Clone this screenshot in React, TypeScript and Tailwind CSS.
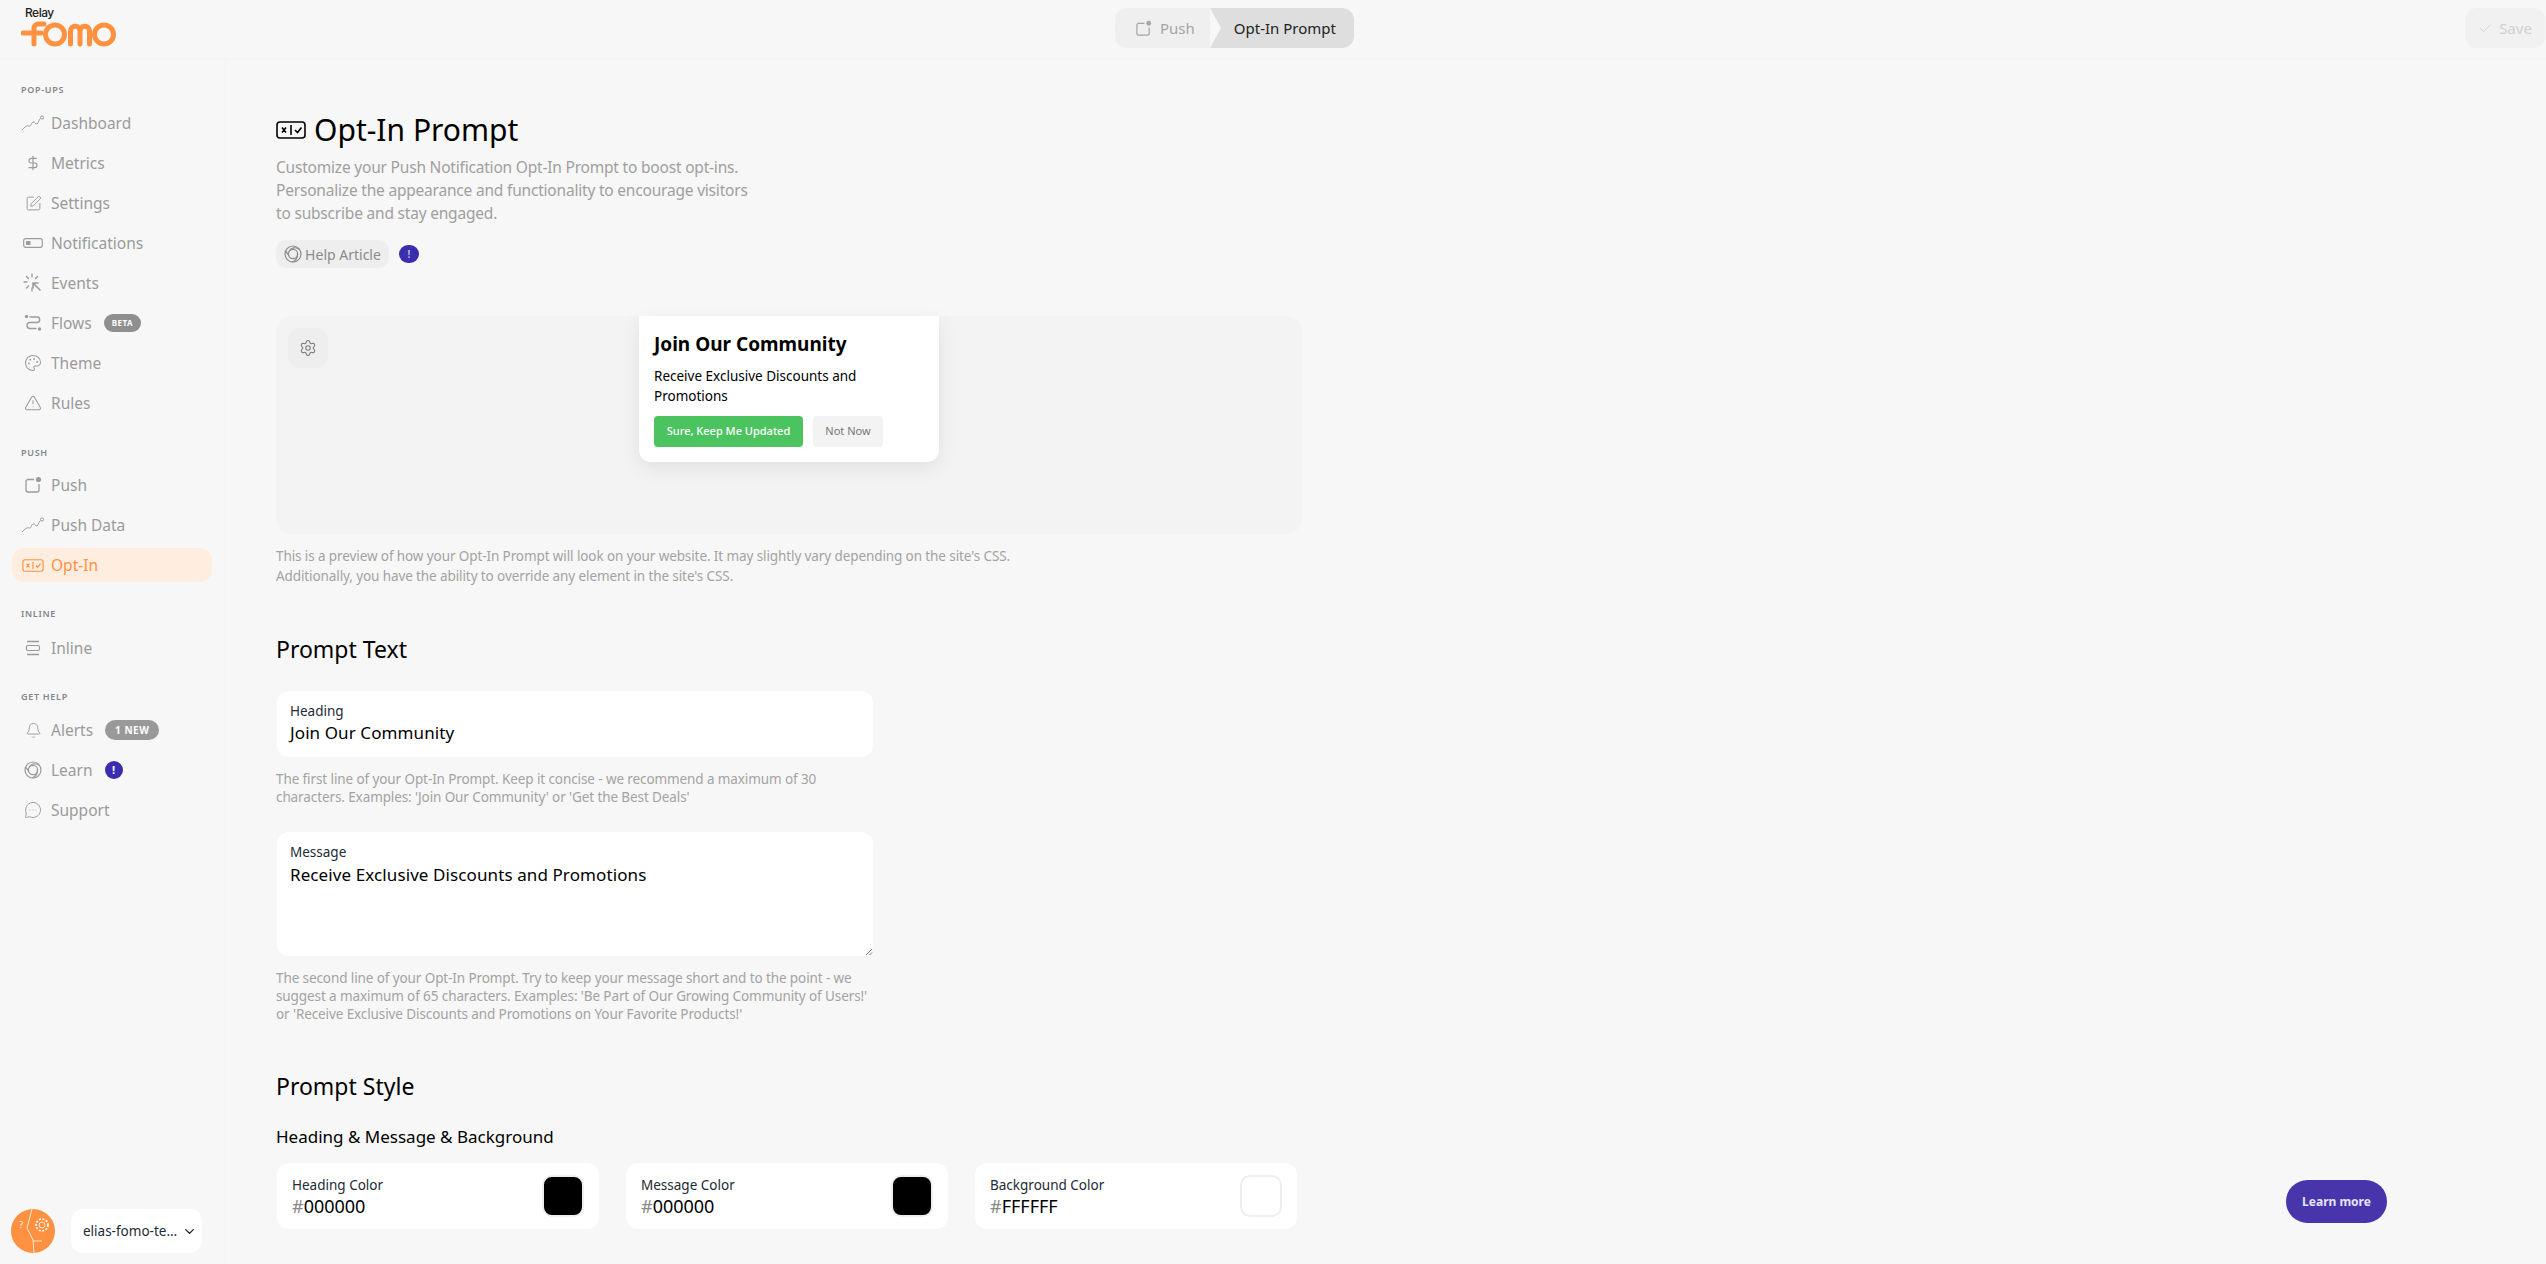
import { Bell, Check, ChevronDown, DollarSign, MessageCircleMore, Palette, Settings, SquarePen, TriangleAlert } from "lucide-react";
import type { ReactNode } from "react";

const FONT = "font-['Noto_Sans','Liberation_Sans',sans-serif]";

const ChartIcon = () => (
    <svg width="24" height="16" viewBox="0 0 24 16" fill="none" stroke="currentColor" strokeWidth="1">
        <path d="M1 15 C4 12 6 10 8 11 C10 12 10 8 12 7 C14 6 15 10 16 9 C18 7 18 4 19.5 3.5" />
        <circle cx="21" cy="2.5" r="1.6" />
    </svg>
);

const PromptIcon = ({ width = 22, height = 13 }: { width?: number; height?: number }) => (
    <svg width={width} height={height} viewBox="0 0 30 18" fill="none" stroke="currentColor" strokeWidth="1.6">
        <rect x="1" y="1" width="28" height="16" rx="3" />
        <path d="M6 6.5l4 5M10 6.5l-4 5M15 4v10M19 9l2.5 2.5 4-5" />
    </svg>
);

const ToggleIcon = () => (
    <svg width="20" height="10" viewBox="0 0 20 10" fill="none">
        <rect x="0.7" y="0.7" width="18.6" height="8.6" rx="2" stroke="currentColor" strokeWidth="1.2" />
        <rect x="3" y="3" width="4.5" height="4" fill="currentColor" />
    </svg>
);

const EventsIcon = () => (
    <svg width="20" height="20" viewBox="0 0 20 20" fill="none" stroke="currentColor" strokeWidth="1.3" strokeLinecap="round">
        <path d="M9 1v3M9 15v3M1 9h3M3.5 3.5l2 2M3.5 15l2-2M14.5 3.5l-2 2" />
        <path d="M10 10h5M10 10v5M10 10l7 7" strokeWidth="1.6" />
    </svg>
);

const FlowsIcon = () => (
    <svg width="18" height="18" viewBox="0 0 18 18" fill="none" stroke="currentColor" strokeWidth="1.3" strokeLinecap="round">
        <circle cx="2.5" cy="2.5" r="1.7" fill="currentColor" stroke="none" />
        <circle cx="15.5" cy="15" r="1.7" fill="currentColor" stroke="none" />
        <path d="M6 3h7a2.5 2.5 0 0 1 0 5.5H6A2.5 2.5 0 0 0 6 14.5h6" />
    </svg>
);

const PushIcon = ({ size = 18 }: { size?: number }) => (
    <svg width={size} height={size} viewBox="0 0 18 18" fill="none">
        <path d="M10 3.5H4a2 2 0 0 0-2 2V14a2 2 0 0 0 2 2h9a2 2 0 0 0 2-2V8" stroke="currentColor" strokeWidth="1.3" />
        <circle cx="14.5" cy="3.5" r="2.6" fill="currentColor" />
    </svg>
);

const InlineIcon = () => (
    <svg width="16" height="16" viewBox="0 0 16 16" fill="none" stroke="currentColor" strokeWidth="1.2">
        <path d="M2 1.5h12M2 14.5h12" strokeWidth="1.4" />
        <rect x="1.5" y="5.5" width="13" height="5" rx="1.5" />
    </svg>
);

const LearnIcon = ({ size = 18 }: { size?: number }) => (
    <svg width={size} height={size} viewBox="0 0 18 18" fill="none" stroke="currentColor" strokeWidth="1.2">
        <circle cx="9" cy="9" r="8" />
        <circle cx="9" cy="9" r="4.6" />
        <path d="M5 6.5C7 2.5 12 1.5 15.5 4.5M13.4 8C14 12 12 15.5 8 17M5 11C3.5 8.5 2.5 7 1.6 6" />
    </svg>
);

const Logo = () => (
    <div className="flex flex-col items-start pl-[21px] pt-[6px]">
        <span className="ml-1 text-[12px] leading-[14px] font-medium tracking-[-0.5px] text-[#222] font-['Inter',sans-serif]">Relay</span>
        <svg className="mt-px" width="96" height="26" viewBox="0 0 96 26" fill="none" stroke="#ff9141" strokeWidth="5" strokeLinecap="round">
            <path d="M2 12h18M23 3h-6a4 4 0 0 0-4 4v16" />
            <circle cx="34" cy="13.5" r="9.5" />
            <path d="M49.5 23V10a4.75 4.75 0 0 1 9.5 0V23M59 10a4.75 4.75 0 0 1 9.5 0V23" />
            <circle cx="83" cy="13.5" r="9.5" />
        </svg>
    </div>
);

interface NavItemProps {
    icon: ReactNode;
    label: string;
    active?: boolean;
    extra?: ReactNode;
}

const NavItem = ({ icon, label, active, extra }: NavItemProps) => (
    <div className={`mx-3 mb-[6px] flex h-[34px] items-center rounded-[12px] ${active ? "bg-[#ffede0] text-[#ff9141]" : "text-[#9b9b9b]"}`}>
        <span className="ml-[9px] flex w-6 shrink-0 items-center justify-center">{icon}</span>
        <span className="ml-[6px] translate-y-px text-[15.5px] leading-none">{label}</span>
        {extra}
    </div>
);

const NavLabel = ({ text, className }: { text: string; className: string }) => (
    <div className={`pl-[21px] text-[9px] leading-[12px] font-semibold tracking-[0.7px] text-[#85868c] ${className}`}>{text}</div>
);

const Sidebar = () => (
    <aside className="flex h-full w-[226px] shrink-0 flex-col border-r-2 border-[#f5f5f5] pt-[24px]">
        <NavLabel text="POP-UPS" className="mb-[10px]" />
        <NavItem icon={<ChartIcon />} label="Dashboard" />
        <NavItem icon={<DollarSign size={16} strokeWidth={1.8} />} label="Metrics" />
        <NavItem icon={<SquarePen size={17} strokeWidth={1.4} />} label="Settings" />
        <NavItem icon={<ToggleIcon />} label="Notifications" />
        <NavItem icon={<EventsIcon />} label="Events" />
        <NavItem
            icon={<FlowsIcon />}
            label="Flows"
            extra={<span className="ml-[12px] rounded-full bg-[#8f8f8f] px-2 py-[3px] text-[8px] leading-[12px] font-bold tracking-[0.5px] text-white">BETA</span>}
        />
        <NavItem icon={<Palette size={18} strokeWidth={1.4} />} label="Theme" />
        <NavItem icon={<TriangleAlert size={18} strokeWidth={1.4} />} label="Rules" />
        <NavLabel text="PUSH" className="mt-[21px] mb-[9px]" />
        <NavItem icon={<PushIcon />} label="Push" />
        <NavItem icon={<ChartIcon />} label="Push Data" />
        <NavItem icon={<PromptIcon />} label="Opt-In" active />
        <NavLabel text="INLINE" className="mt-[20px] mb-[11px]" />
        <NavItem icon={<InlineIcon />} label="Inline" />
        <NavLabel text="GET HELP" className="mt-[20px] mb-[10px]" />
        <NavItem
            icon={<Bell size={17} strokeWidth={1.3} />}
            label="Alerts"
            extra={<span className="ml-3 rounded-full bg-[#999] px-[10px] py-[2px] text-[10px] leading-[16px] font-bold tracking-[0.5px] text-white">1 NEW</span>}
        />
        <NavItem
            icon={<LearnIcon />}
            label="Learn"
            extra={<span className="ml-3 flex h-[18px] w-[18px] items-center justify-center rounded-full bg-[#3b2db0] text-[11px] font-bold text-white">!</span>}
        />
        <NavItem icon={<MessageCircleMore size={18} strokeWidth={1.3} />} label="Support" />
        <div className="mt-auto mb-[11px] flex items-center pl-[11px]">
            <div className="flex h-[44px] w-[44px] items-center justify-center overflow-hidden rounded-full bg-[#ff9141]">
                <svg width="44" height="44" viewBox="0 0 44 44" fill="none" stroke="#fff" strokeWidth="0.8">
                    <path d="M21 0L16 19L22 31L23 44M22 32H31" />
                    <circle cx="31" cy="16" r="3" />
                    <circle cx="31" cy="16" r="6" strokeDasharray="2 1.5" strokeWidth="1.6" />
                    <text x="8.5" y="19" fontSize="8" fill="#fff" stroke="none" fontFamily="Noto Sans">?</text>
                </svg>
            </div>
            <div className="ml-4 flex h-[44px] w-[131px] items-center rounded-[12px] bg-white pl-3 text-[13.5px] text-[#222a35]">
                <span className="w-[94px] whitespace-nowrap">elias-fomo-te…</span>
                <ChevronDown size={15} strokeWidth={2.2} className="ml-[5px] text-[#222]" />
            </div>
        </div>
    </aside>
);

const TopBar = () => (
    <header className="flex h-[60px] shrink-0 items-start border-b-2 border-[#f4f4f4]">
        <div className="w-[1115px] shrink-0"><Logo /></div>
        <div className="mt-2 flex h-10 w-[239px] overflow-hidden rounded-[12px] text-[15px]">
            <div className="flex w-[95px] items-center gap-2 bg-[#efefef] pl-5 text-[#a6a6a6]">
                <PushIcon size={17} />
                <span>Push</span>
            </div>
            <div className="flex flex-1 items-center justify-end bg-[#dedede] pr-[18px] text-[#222] [clip-path:polygon(0_0,100%_0,100%_100%,0_100%,11px_50%)]">
                Opt-In Prompt
            </div>
        </div>
        <div className="mt-2 mr-px ml-auto flex h-10 w-[80px] items-center justify-center gap-[6px] rounded-[12px] bg-[#f1f1f1] text-[15px] text-[#cfcfcf]">
            <Check size={15} strokeWidth={1.5} />
            Save
        </div>
    </header>
);

const ColorCard = ({ label, hex, swatch }: { label: string; hex: string; swatch: string }) => (
    <div className="flex h-[66px] w-[322px] items-center justify-between rounded-[12px] bg-white pr-[15px] pl-[15px]">
        <div>
            <div className="translate-y-px text-[13.5px] leading-[18px] text-[#222a35]">{label}</div>
            <div className="mt-[2px] text-[18px] leading-[22px] text-black"><span className="text-[#8a8a8a]">#</span>{hex}</div>
        </div>
        <div className={`h-[42px] w-[42px] rounded-[10px] border-2 border-[#eeeeee] ${swatch}`} />
    </div>
);

const Hint = ({ children, className }: { children: ReactNode; className?: string }) => (
    <p className={`text-[13.5px] leading-[18px] tracking-[-0.1px] text-[#a3a3a3] ${className ?? ""}`}>{children}</p>
);

const Main = () => (
    <main className="relative min-w-0 flex-1 overflow-hidden pt-[50px] pl-[50px]">
        <div className="flex h-10 items-center gap-2 text-black">
            <PromptIcon width={30} height={18} />
            <h1 className="text-[30px] leading-10">Opt-In Prompt</h1>
        </div>
        <p className="mt-[6px] text-[15.5px] leading-[23px] tracking-[-0.2px] text-[#a0a0a0]">
            Customize your Push Notification Opt-In Prompt to boost opt-ins.<br />
            Personalize the appearance and functionality to encourage visitors<br />
            to subscribe and stay engaged.
        </p>
        <div className="mt-[15px] flex items-center gap-[10px]">
            <div className="flex h-7 w-[113px] items-center justify-center gap-[3px] rounded-[10px] bg-[#eeeeee] text-[14px] text-[#8b8b8b]">
                <LearnIcon />
                Help Article
            </div>
            <span className="flex h-[18px] w-5 items-center justify-center rounded-full bg-[#3b2db0] text-[10px] font-bold text-[#bbb]">!</span>
        </div>

        <div className="relative mt-12 flex h-[218px] w-[1026px] justify-center rounded-[16px] bg-[#f3f3f3]">
            <div className="absolute top-3 left-3 flex h-10 w-10 items-center justify-center rounded-[12px] bg-[#eeeeee] text-[#777]">
                <Settings size={18} strokeWidth={1.4} />
            </div>
            <div className="h-[146px] w-[300px] rounded-b-[12px] bg-white px-[15px] pt-[15px] shadow-[0_6px_20px_rgba(0,0,0,0.08)]">
                <div className="text-[19px] leading-[26px] font-bold text-black">Join Our Community</div>
                <div className="mt-[9px] w-[240px] text-[13.5px] leading-5 text-black">Receive Exclusive Discounts and Promotions</div>
                <div className="mt-[10px] flex gap-[10px]">
                    <div className="flex h-[31px] w-[149px] items-center justify-center rounded-[4px] bg-[#4bc460] text-[11px] font-medium text-white">Sure, Keep Me Updated</div>
                    <div className="flex h-[31px] w-[70px] items-center justify-center rounded-[4px] bg-[#f3f3f3] text-[11px] text-[#777]">Not Now</div>
                </div>
            </div>
        </div>
        <p className="mt-[12px] text-[13.5px] leading-5 tracking-[-0.1px] text-[#a3a3a3]">
            This is a preview of how your Opt-In Prompt will look on your website. It may slightly vary depending on the site's CSS.<br />
            Additionally, you have the ability to override any element in the site's CSS.
        </p>

        <h2 className="mt-[47px] text-[23px] leading-8 text-black">Prompt Text</h2>
        <div className="mt-[26px] ml-px h-[66px] w-[596px] rounded-[12px] bg-white pt-3 pl-[13px]">
            <div className="text-[13.5px] leading-4 text-[#222a35]">Heading</div>
            <div className="mt-[2px] text-[17px] leading-[24px] tracking-[0.1px] text-black">Join Our Community</div>
        </div>
        <Hint className="mt-[13px] w-[600px]">
            The first line of your Opt-In Prompt. Keep it concise - we recommend a maximum of 30<br />
            characters. Examples: 'Join Our Community' or 'Get the Best Deals'
        </Hint>
        <div className="relative mt-[26px] ml-px h-[124px] w-[596px] rounded-[12px] bg-white pt-3 pl-[13px]">
            <div className="text-[13.5px] leading-4 text-[#222a35]">Message</div>
            <div className="mt-[3px] text-[17px] leading-[24px] tracking-[0.1px] text-black">Receive Exclusive Discounts and Promotions</div>
            <svg className="absolute right-0 bottom-0" width="8" height="8" viewBox="0 0 8 8" stroke="#555" strokeWidth="0.8">
                <path d="M1 7L7 1M4.5 7L7 4.5" />
            </svg>
        </div>
        <Hint className="mt-[13px] w-[600px]">
            The second line of your Opt-In Prompt. Try to keep your message short and to the point - we<br />
            suggest a maximum of 65 characters. Examples: 'Be Part of Our Growing Community of Users!'<br />
            or 'Receive Exclusive Discounts and Promotions on Your Favorite Products!'
        </Hint>

        <h2 className="mt-[47px] text-[23px] leading-8 text-black">Prompt Style</h2>
        <h3 className="mt-[23px] text-[17px] leading-6 text-black">Heading &amp; Message &amp; Background</h3>
        <div className="mt-[14px] ml-px flex gap-[27px]">
            <ColorCard label="Heading Color" hex="000000" swatch="bg-black" />
            <ColorCard label="Message Color" hex="000000" swatch="bg-black" />
            <ColorCard label="Background Color" hex="FFFFFF" swatch="bg-white" />
        </div>

        <div className="absolute top-[1120px] left-[2060px] flex h-[43px] w-[101px] items-center justify-center rounded-full bg-[#4834ab] text-[12px] font-bold text-[#e6e4f7]">
            Learn more
        </div>
    </main>
);

export default function App() {
    return (
        <div className={`flex h-screen flex-col overflow-hidden bg-[#f7f7f7] ${FONT}`}>
            <TopBar />
            <div className="flex min-h-0 flex-1">
                <Sidebar />
                <Main />
            </div>
        </div>
    );
}
